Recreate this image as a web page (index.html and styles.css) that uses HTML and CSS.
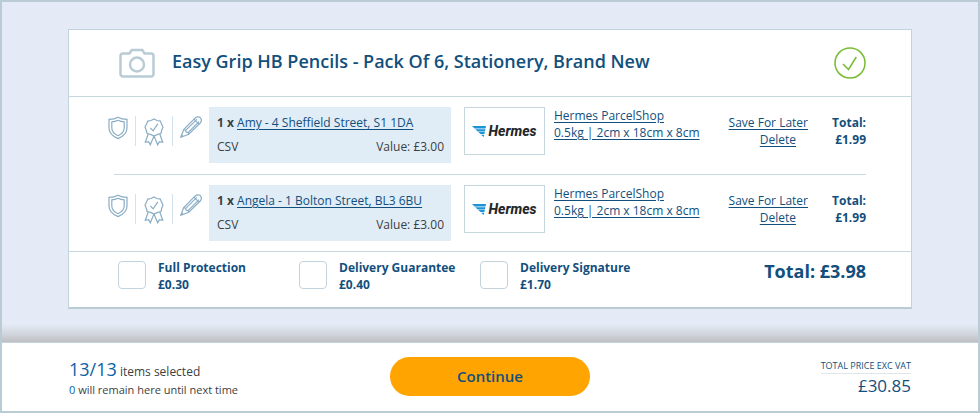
FILE: index.html
```html
<!DOCTYPE html>
<html lang="en">
<head>
<meta charset="utf-8">
<meta name="viewport" content="width=device-width, initial-scale=1">
<title>Basket</title>
<link rel="stylesheet" href="styles.css">
</head>
<body>
<svg class="sprite" aria-hidden="true">
  <symbol id="shield" viewBox="0 0 20 24">
    <path d="M10 1.200C7.200 2.800 4 3.300 1 3.300V12c0 5 3.800 8.400 9 10.600 5.200-2.200 9-5.600 9-10.600V3.300C16 3.300 12.800 2.800 10 1.200Z"/>
    <path d="M10 4.300C8 5.300 6 5.800 3.800 5.900V12c0 3.500 2.500 6 6.200 7.700 3.700-1.700 6.200-4.200 6.200-7.700V5.900C14 5.800 12 5.300 10 4.300Z"/>
  </symbol>
  <symbol id="rosette" viewBox="0 0 20 28">
    <path d="M10 1l3 1.500 3.300.6 1.200 3L19 9.300l-1.300 3-.7 3.200-3.300.9L10 18l-3.500-1.600-3.400-.9-.8-3.200L1 9.300l1.500-3.200 1.300-3L7 2.500Z"/>
    <path d="M6.300 9.800l2.800 3L13.800 5.800"/>
    <path d="M4.200 16L1.300 24.300l3.300-.6 1.700 3.100L10 18l3.700 8.800 1.700-3.100 3.300.6L15.800 16"/>
  </symbol>
  <symbol id="pencil" viewBox="0 0 22 22">
    <path d="M.8 21.200L3.700 13.500 15 2.200C16.500.8 18.300.6 20 1.300c1.500 1.500 1.600 4 .2 5.700L8.700 18.300Z"/>
    <path d="M3.700 13.500l2 .9.400 1.700 2 .5.600 1.700M5.700 14.400L16.800 3.300M8.100 16.600L19 5.700M14 3.200l5 5M1.500 19l1.500 1.500"/>
  </symbol>
  <symbol id="hermes-wings" viewBox="0 0 14 11">
    <path d="M0 0h14l-.5 2.600H2.600ZM3.200 3.200h10.200l-.5 2.300H5.700ZM6.300 6.100h6.500l-.4 2H8.500ZM9 8.700h3.200L11.700 11Z"/>
  </symbol>
</svg>

<div class="page">
  <main class="basket">
    <section class="card">
      <header class="card-head">
        <svg class="camera" viewBox="0 0 36 30" aria-hidden="true">
          <path d="M4 5.500h6.500L12.700 2h10.600l2.200 3.500H32A2.500 2.500 0 0 1 34.500 8v18a2.500 2.500 0 0 1-2.500 2.500H4A2.500 2.500 0 0 1 1.500 26V8A2.500 2.500 0 0 1 4 5.500Z"/>
          <circle cx="18" cy="16.500" r="7"/>
        </svg>
        <h1>Easy Grip HB Pencils - Pack Of 6, Stationery, Brand New</h1>
        <svg class="tick" viewBox="0 0 32 32" aria-hidden="true">
          <circle cx="16" cy="16" r="15"/>
          <path d="M9 17l5.500 5.500L22.300 10"/>
        </svg>
      </header>

      <ul class="rows">
        <li class="row">
          <div class="extras">
            <svg class="shield"><use href="#shield"/></svg>
            <svg class="rosette"><use href="#rosette"/></svg>
            <svg class="pencil"><use href="#pencil"/></svg>
          </div>
          <div class="recipient">
            <p><b>1 x</b> <a href="#">Amy - 4 Sheffield Street, S1 1DA</a></p>
            <p class="split"><span>CSV</span><span>Value: £3.00</span></p>
          </div>
          <div class="carrier"><svg><use href="#hermes-wings"/></svg><span>Hermes</span></div>
          <p class="service"><a href="#">Hermes ParcelShop<br>0.5kg | 2cm x 18cm x 8cm</a></p>
          <div class="actions"><a href="#">Save For Later</a><a class="delete" href="#">Delete</a></div>
          <p class="row-total">Total:<br>£1.99</p>
        </li>
        <li class="divider" role="separator"></li>
        <li class="row">
          <div class="extras">
            <svg class="shield"><use href="#shield"/></svg>
            <svg class="rosette"><use href="#rosette"/></svg>
            <svg class="pencil"><use href="#pencil"/></svg>
          </div>
          <div class="recipient">
            <p><b>1 x</b> <a href="#">Angela - 1 Bolton Street, BL3 6BU</a></p>
            <p class="split"><span>CSV</span><span>Value: £3.00</span></p>
          </div>
          <div class="carrier"><svg><use href="#hermes-wings"/></svg><span>Hermes</span></div>
          <p class="service"><a href="#">Hermes ParcelShop<br>0.5kg | 2cm x 18cm x 8cm</a></p>
          <div class="actions"><a href="#">Save For Later</a><a class="delete" href="#">Delete</a></div>
          <p class="row-total">Total:<br>£1.99</p>
        </li>
      </ul>

      <div class="options">
        <div class="option"><input type="checkbox" id="protection"><label for="protection">Full Protection<br>£0.30</label></div>
        <div class="option"><input type="checkbox" id="guarantee"><label for="guarantee">Delivery Guarantee<br>£0.40</label></div>
        <div class="option"><input type="checkbox" id="signature"><label for="signature">Delivery Signature<br>£1.70</label></div>
        <p class="card-total">Total: £3.98</p>
      </div>
    </section>
  </main>

  <footer class="summary">
    <div class="selected">
      <p><span class="count">13/13</span> items selected</p>
      <p class="remaining"><span>0</span> will remain here until next time</p>
    </div>
    <button type="button">Continue</button>
    <div class="price">
      <p class="price-label">TOTAL PRICE EXC VAT</p>
      <p class="price-value">£30.85</p>
    </div>
  </footer>
</div>
</body>
</html>
```

FILE: styles.css
```css
* {
  box-sizing: border-box;
}

body {
  margin: 0;
  font: 500 12px/17px "Trebuchet MS", "Open Sans", sans-serif;
  color: #3c3f42;
  background: #b9ccd6;
}

h1, p, ul {
  margin: 0;
  padding: 0;
}

a {
  color: #124f7d;
  text-underline-offset: 2px;
}

.sprite {
  position: absolute;
  width: 0;
  height: 0;
}

.page {
  display: flex;
  flex-direction: column;
  min-height: 100vh;
  border: 2px solid #b9ccd6;
  background: #fff;
}

.basket {
  padding: 27px 66px 33px;
  background: linear-gradient(to top, #bebfc3, #d2d5dd 8px, #e4ebf6 18px);
}

.card {
  border: 1px solid #c3d3dd;
  border-bottom: 2px solid #b9ccd6;
  background: #fff;
}

.card-head {
  display: flex;
  align-items: center;
  gap: 17px;
  height: 67px;
  padding: 0 45px 0 50px;
  border-bottom: 1px solid #c6d6df;
}

.card-head h1 {
  flex: 1;
  font-size: 18px;
  line-height: 24px;
  font-weight: 600;
  color: #124f7d;
  padding-bottom: 4px;
}

.camera {
  width: 36px;
  height: 30px;
  fill: none;
  stroke: #b9ccd6;
  stroke-width: 2.5;
}

.tick {
  width: 32px;
  height: 32px;
  fill: none;
  stroke: #77bd32;
  stroke-width: 1.5;
}

.rows {
  list-style: none;
}

.row {
  display: grid;
  grid-template-columns: 94px 242px 81px 1fr auto 42px;
  padding: 10px 45px 11px 39px;
}

.row:last-child {
  padding-bottom: 10px;
}

.divider {
  height: 1px;
  margin: 0 45px;
  background: #c9d9e3;
}

.extras {
  display: flex;
  justify-content: space-between;
  align-items: flex-start;
  padding-top: 9px;
}

.extras svg {
  fill: none;
  stroke: #8aadc6;
  stroke-width: 1.2;
}

.shield {
  width: 20px;
  height: 24px;
}

.rosette {
  width: 38px;
  height: 30px;
  padding: 2px 8px 0;
  border: solid #d3e2ec;
  border-width: 0 1px;
}

.pencil {
  width: 22px;
  height: 22px;
}

.recipient {
  display: flex;
  flex-direction: column;
  gap: 7px;
  height: 56px;
  margin-left: 7px;
  margin-right: -7px;
  padding: 7px 7px 7px 8px;
  background: #e0edf7;
  white-space: nowrap;
}

.split {
  display: flex;
  justify-content: space-between;
}

.carrier {
  display: flex;
  align-items: center;
  justify-content: center;
  gap: 2px;
  width: 81px;
  height: 48px;
  margin-left: 20px;
  border: 1px solid #c6d6df;
  font: italic 800 14px/16px Roboto, sans-serif;
  color: #25282b;
}

.carrier svg {
  width: 14px;
  height: 11px;
  fill: #1c93d4;
}

.service {
  margin-left: 29px;
  white-space: nowrap;
}

.actions {
  display: flex;
  flex-direction: column;
  align-items: flex-end;
  padding-top: 7px;
  margin-right: 16px;
}

.delete {
  margin-right: 12px;
}

.row-total {
  padding-top: 7px;
  font-weight: 700;
  color: #124f7d;
  text-align: right;
}

.options {
  display: grid;
  grid-template-columns: repeat(3, 181px) 1fr;
  padding: 7px 45px 18px 49px;
  border-top: 1px solid #c6d6df;
}

.option {
  display: flex;
  align-items: flex-start;
  gap: 12px;
  height: 30px;
  font-weight: 700;
  color: #124f7d;
}

.option input {
  appearance: none;
  width: 28px;
  height: 28px;
  margin: 2px 0 0;
  border: 1px solid #c3d3dd;
  border-radius: 4px;
  background: #fff;
}

.card-total {
  font-size: 18px;
  line-height: 24px;
  font-weight: 700;
  color: #124f7d;
  text-align: right;
}

.summary {
  flex: 1;
  display: grid;
  grid-template-columns: 1fr 200px 1fr;
  align-items: center;
  padding: 0 67px 2px;
  border-top: 1px solid #c6d6df;
}

.count {
  font-size: 18px;
  line-height: 24px;
  color: #0b62a6;
}

.selected {
  padding-top: 2px;
}

.remaining {
  font-size: 11px;
}

.remaining span {
  color: #0b62a6;
}

.summary button {
  height: 39px;
  border: 0;
  border-radius: 20px;
  background: #ffa400;
  color: #124f7d;
  font: 600 15px/20px "Trebuchet MS", "Open Sans", sans-serif;
}

.price {
  justify-self: end;
  padding-top: 4px;
  color: #124f7d;
  text-align: right;
}

.price-label {
  font-size: 9px;
  line-height: 14px;
  border-bottom: 1px solid #dfe5e9;
}

.price-value {
  font-size: 17px;
  line-height: 24px;
}
```
